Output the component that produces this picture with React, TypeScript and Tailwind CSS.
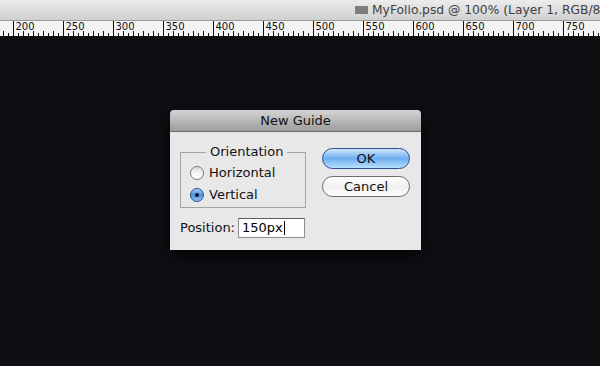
const font = { fontFamily: '"Lucida Grande", "DejaVu Sans", sans-serif' };

function Ruler() {
  // ruler spans 187..787 units, 1px per unit, tick for 200 at x=13.5
  const start = 186;
  const ticks = [];
  const labels = [];
  for (let u = 190; u <= 790; u += 5) {
    const x = u - start - 0.5;
    if (u % 50 === 0) {
      ticks.push(<line key={u} x1={x} x2={x} y1={0} y2={15} stroke="#111" strokeWidth={1} />);
      labels.push(
        <text key={"t" + u} x={x + 2} y={9} fontSize={10} fill="#111" style={font}>
          {u}
        </text>
      );
    } else if (u % 10 === 0) {
      ticks.push(<line key={u} x1={x} x2={x} y1={10} y2={15} stroke="#111" strokeWidth={1} />);
    } else {
      ticks.push(<line key={u} x1={x} x2={x} y1={12} y2={15} stroke="#111" strokeWidth={1} />);
    }
  }
  return (
    <svg width={600} height={15} className="block shrink-0">
      <rect width={600} height={15} fill="#f4f4f4" />
      {ticks}
      {labels}
    </svg>
  );
}

function Radio({ checked, label }: { checked?: boolean; label: string }) {
  return (
    <div className="flex h-[22px] items-center">
      {checked ? (
        <span className="flex h-[14px] w-[14px] shrink-0 items-center justify-center rounded-full border border-[#2d4f86] bg-gradient-to-b from-[#a8cdf4] via-[#4d90e0] to-[#8ec6f6]">
          <span className="h-[4px] w-[4px] rounded-full bg-[#111]" />
        </span>
      ) : (
        <span className="h-[14px] w-[14px] shrink-0 rounded-full border border-[#7a7a7a] bg-gradient-to-b from-[#d8d8d8] via-[#f4f4f4] to-[#ffffff]" />
      )}
      <span className="ml-[5px] text-[13px] text-[#111]">{label}</span>
    </div>
  );
}

export default function App() {
  return (
    <div className="flex h-[366px] w-[600px] flex-col overflow-hidden bg-[#0d0f13]" style={font}>
      {/* window title */}
      <div className="flex h-[21px] shrink-0 items-center overflow-hidden border-b border-[#9a9a9a] bg-gradient-to-b from-[#ececec] to-[#d0d0d0] pl-[355px]">
        <span className="h-[8px] w-[13px] shrink-0 bg-[#7d7d7d]" />
        <span className="ml-[4px] shrink-0 whitespace-nowrap text-[12.3px] text-[#3f3f3f]">
          MyFolio.psd @ 100% (Layer 1, RGB/8
        </span>
      </div>
      <Ruler />

      {/* canvas */}
      <div className="flex-1 pl-[170px] pt-[74px]">
        <div className="w-[251px] shadow-[0_6px_18px_rgba(0,0,0,0.8)]">
          <div className="flex h-[22px] items-center justify-center rounded-t-[4px] border-b border-[#6a6a6a] bg-gradient-to-b from-[#d4d4d4] to-[#9d9d9d] pt-[1px] text-[13px] text-[#111]">
            New Guide
          </div>
          <div className="flex h-[118px] bg-[#e8e8e8] pl-[10px]">
            <div className="w-[126px]">
              <fieldset className="mt-[12px] h-[64px] border border-[#a4a4a4] pl-[9px] pt-[2px]">
                <legend className="ml-[16px] px-[4px] text-[13px] leading-[16px] text-[#111]">Orientation</legend>
                <Radio label="Horizontal" />
                <Radio checked label="Vertical" />
              </fieldset>
              <div className="mt-[10px] flex items-center">
                <span className="text-[13px] text-[#111]">Position:</span>
                <div className="ml-[3px] flex h-[20px] w-[67px] items-center border border-[#8e8e8e] border-t-[#5e5e5e] bg-white pl-[3px] text-[13px] text-[#000]">
                  150px
                  <span className="ml-[1px] h-[14px] w-[1px] bg-black" />
                </div>
              </div>
            </div>
            <div className="ml-[16px] flex flex-col pt-[16px]">
              <button className="h-[21px] w-[88px] rounded-full border border-[#2b4f8a] bg-gradient-to-b from-[#cfe6fb] via-[#6eaef0] to-[#b7e0fd] text-[13px] text-[#111]">
                OK
              </button>
              <button className="mt-[7px] h-[21px] w-[88px] rounded-full border border-[#6b6b6b] bg-gradient-to-b from-[#ffffff] via-[#f0f0f0] to-[#fdfdfd] text-[13px] text-[#111]">
                Cancel
              </button>
            </div>
          </div>
        </div>
      </div>
    </div>
  );
}
